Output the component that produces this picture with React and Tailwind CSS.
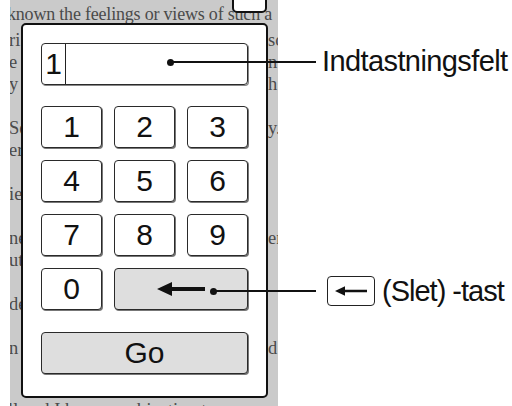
import React from 'react';

const lines = [
    ['ri', 'so'],
    ['e s', 'n'],
    ['y', 'h'],
    ['', ''],
    ['Se', 'y.'],
    ['er', ''],
    ['', ''],
    ['ie', ''],
    ['', ''],
    ['ne', 'er'],
    ['ut', ''],
    ['', ''],
    ['de', ''],
    ['', ''],
    ['n', 'd I'],
    ['', ''],
];

const Key = ({ children, gray, className = '' }) => (
    <div
        className={`h-[42px] flex items-center justify-center rounded-[4px] border-[1.5px] border-[#2a2a2a] shadow-[1px_1px_0_#777] text-[30px] leading-none text-[#111] ${gray ? 'bg-[#dedede]' : 'bg-white'} ${className}`}
    >
        {children}
    </div>
);

const Arrow = ({ w = 48, h = 14 }) => (
    <svg width={w} height={h} viewBox="0 0 48 14">
        <path d="M0 7 L15 0 L15 5 L48 5 L48 9 L15 9 L15 14 Z" fill="#111" />
    </svg>
);

export default function App() {
    return (
        <div className="relative w-[512px] h-[406px] bg-white overflow-hidden" style={{ fontFamily: '"Liberation Sans", Arial, sans-serif' }}>
            {/* page behind the dialog */}
            <div className="absolute left-[10px] top-0 w-[268px] h-[406px] bg-[#cacaca] overflow-hidden text-[#4a4a4a] text-[18.5px] leading-[22px]" style={{ fontFamily: '"Liberation Serif", "Times New Roman", serif' }}>
                <div className="whitespace-nowrap -ml-[3px] pt-[3px] text-[18px] tracking-[-0.2px]">known the feelings or views of such a</div>
                <div className="mt-[4px]">
                    {lines.map(([l, r], i) => (
                        <div key={i} className="flex justify-between h-[22px] whitespace-nowrap">
                            <span className="-ml-[1px]">{l}</span>
                            <span className="w-[10px] overflow-hidden">{r}</span>
                        </div>
                    ))}
                </div>
                <div className="whitespace-nowrap pt-[18px] -ml-[2px]">ll   and I have no objection to</div>
            </div>

            {/* element above, cut off */}
            <div className="absolute left-[232px] -top-[10px] w-[35px] h-[23px] bg-white border-2 border-[#111] rounded-b-[5px]" />

            {/* dialog */}
            <div className="absolute left-[21px] top-[23px] w-[247px] h-[375px] bg-white border-2 border-[#111] rounded-[5px] px-[18px] pt-[18px]">
                <div className="h-[42px] flex items-stretch rounded-[4px] border-[1.5px] border-[#2a2a2a] shadow-[1px_1px_0_#888]">
                    <div className="w-[24px] border-r-[1.5px] border-[#222] flex items-center justify-center text-[30px] leading-none text-[#111]">1</div>
                </div>

                <div className="grid grid-cols-3 gap-x-[12px] gap-y-[12px] mt-[21px]">
                    {['1', '2', '3', '4', '5', '6', '7', '8', '9'].map(n => (
                        <Key key={n}>{n}</Key>
                    ))}
                    <Key>0</Key>
                    <Key gray className="col-span-2">
                        <span className="flex"><Arrow /></span>
                    </Key>
                </div>

                <Key gray className="mt-[22px]">Go</Key>
            </div>

            {/* callouts */}
            <div className="absolute left-[167px] top-[59px] w-[7px] h-[7px] rounded-full bg-[#111]" />
            <div className="absolute left-[170px] top-[61px] w-[146px] h-[2px] bg-[#111]" />
            <div className="absolute left-[322px] top-[47px] text-[29px] leading-none tracking-[-0.6px] whitespace-nowrap text-[#111]">
                Indtastningsfelt
            </div>

            <div className="absolute left-[210px] top-[288px] w-[7px] h-[7px] rounded-full bg-[#111]" />
            <div className="absolute left-[213px] top-[290px] w-[103px] h-[2px] bg-[#111]" />
            <div className="absolute left-[327px] top-[276px] flex items-center gap-[7px]">
                <div className="w-[48px] h-[30px] border-[1.5px] border-[#222] rounded-[4px] flex items-center justify-center">
                    <Arrow w={32} h={10} />
                </div>
                <span className="text-[29px] leading-none tracking-[-1px] whitespace-nowrap text-[#111]">(Slet) -tast</span>
            </div>
        </div>
    );
}
